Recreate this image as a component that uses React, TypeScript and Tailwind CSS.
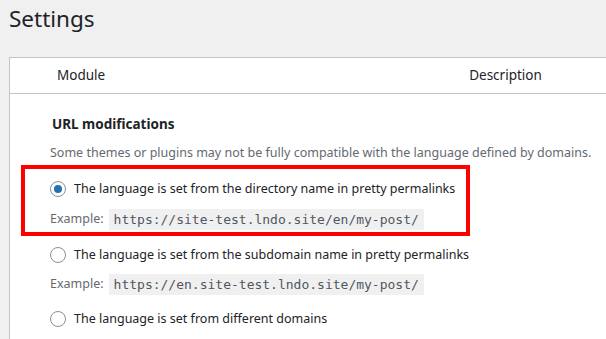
import React from "react";

const Radio = ({ checked }: { checked?: boolean }) => (
  <span className="w-4 h-4 rounded-full border border-[#8c8f94] bg-white flex items-center justify-center shrink-0">
    {checked && <span className="w-2 h-2 rounded-full bg-[#2271b1]" />}
  </span>
);

const mono = { fontFamily: '"DejaVu Sans Mono", monospace' };

export default function App() {
  return (
    <div
      className="w-[606px] h-[339px] overflow-hidden bg-[#f0f0f1] text-[#1d2327] relative"
      style={{ fontFamily: '"Noto Sans", sans-serif' }}
    >
      <h1 className="pl-[9px] pt-[4px] text-[22.5px] leading-[30px] font-normal">Settings</h1>
      <div className="ml-[9px] mt-[23px] w-[700px] bg-white border border-[#c3c4c7] h-[400px]">
        <div className="h-[36px] border-b border-[#c3c4c7] flex items-center text-[13.5px]">
          <span className="ml-[47px]">Module</span>
          <span className="ml-[364px]">Description</span>
        </div>
        <div className="pl-[40px] pt-[20px] text-[12.5px]">
          <div className="ml-[2px] font-bold text-[13.5px] leading-[20px]">URL modifications</div>
          <div className="mt-[9px] text-[#646970] leading-[20px]">
            Some themes or plugins may not be fully compatible with the language defined by domains.
          </div>
          <div className="mt-[15px] flex flex-col">
            <label className="flex items-center gap-[8px] h-[22px]">
              <Radio checked />
              <span>The language is set from the directory name in pretty permalinks</span>
            </label>
            <div className="mt-[9px] flex items-center text-[#646970]">
              <span>Example:</span>
              <code className="ml-[5px] bg-[#f0f0f1] px-[5px] h-[21px] flex items-center text-[#50575e] text-[13px]" style={mono}>
                https://site-test.lndo.site/en/my-post/
              </code>
            </div>
            <label className="mt-[14px] flex items-center gap-[8px] h-[22px]">
              <Radio />
              <span>The language is set from the subdomain name in pretty permalinks</span>
            </label>
            <div className="mt-[8px] flex items-center text-[#646970]">
              <span>Example:</span>
              <code className="ml-[5px] bg-[#f0f0f1] px-[5px] h-[21px] flex items-center text-[#50575e] text-[13px]" style={mono}>
                https://en.site-test.lndo.site/my-post/
              </code>
            </div>
            <label className="mt-[13px] flex items-center gap-[8px] h-[22px]">
              <Radio />
              <span>The language is set from different domains</span>
            </label>
          </div>
        </div>
      </div>
      <div className="absolute left-[21px] top-[165px] w-[449px] h-[71px] border-[4px] border-[#ff0000] pointer-events-none" />
    </div>
  );
}
